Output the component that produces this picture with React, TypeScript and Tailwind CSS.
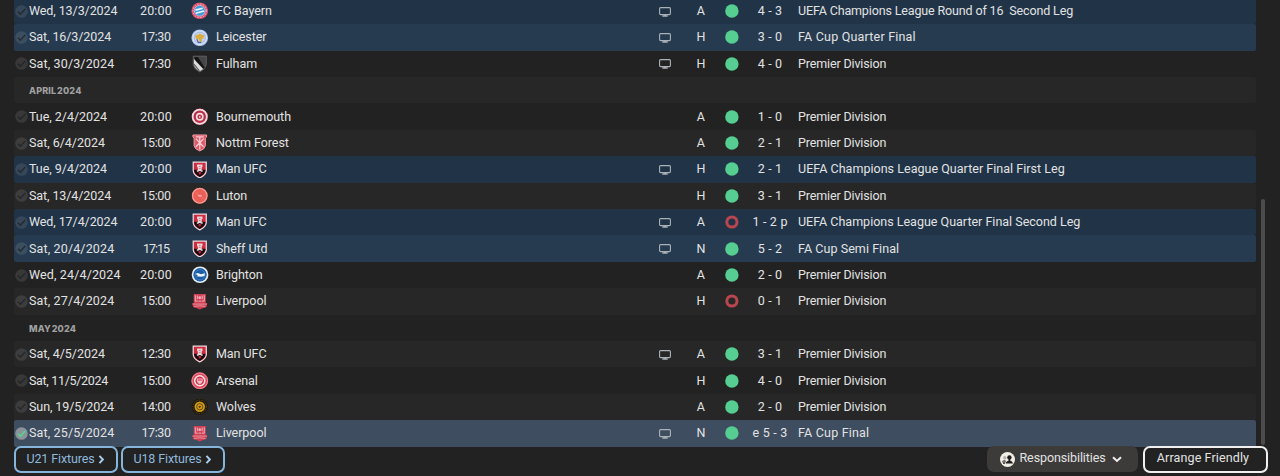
import type { ReactNode } from 'react';
import clsx from 'clsx';

type Club =
  | 'bayern' | 'leicester' | 'fulham' | 'bournemouth' | 'forest' | 'manufc'
  | 'luton' | 'brighton' | 'liverpool' | 'arsenal' | 'wolves';

interface Fixture {
  date: string;
  time: string;
  club: Club;
  name: string;
  tv?: boolean;
  venue: 'H' | 'A' | 'N';
  lost?: boolean;
  score: string;
  competition: string;
  cup?: boolean;
  selected?: boolean;
}

type Row = Fixture | { month: string };

const ROWS: Row[] = [
  { date: 'Wed, 13/3/2024', time: '20:00', club: 'bayern', name: 'FC Bayern', tv: true, venue: 'A', score: '4 - 3', competition: 'UEFA Champions League Round of 16  Second Leg', cup: true },
  { date: 'Sat, 16/3/2024', time: '17:30', club: 'leicester', name: 'Leicester', tv: true, venue: 'H', score: '3 - 0', competition: 'FA Cup Quarter Final', cup: true },
  { date: 'Sat, 30/3/2024', time: '17:30', club: 'fulham', name: 'Fulham', tv: true, venue: 'H', score: '4 - 0', competition: 'Premier Division' },
  { month: 'APRIL 2024' },
  { date: 'Tue, 2/4/2024', time: '20:00', club: 'bournemouth', name: 'Bournemouth', venue: 'A', score: '1 - 0', competition: 'Premier Division' },
  { date: 'Sat, 6/4/2024', time: '15:00', club: 'forest', name: 'Nottm Forest', venue: 'A', score: '2 - 1', competition: 'Premier Division' },
  { date: 'Tue, 9/4/2024', time: '20:00', club: 'manufc', name: 'Man UFC', tv: true, venue: 'H', score: '2 - 1', competition: 'UEFA Champions League Quarter Final First Leg', cup: true },
  { date: 'Sat, 13/4/2024', time: '15:00', club: 'luton', name: 'Luton', venue: 'H', score: '3 - 1', competition: 'Premier Division' },
  { date: 'Wed, 17/4/2024', time: '20:00', club: 'manufc', name: 'Man UFC', tv: true, venue: 'A', lost: true, score: '1 - 2 p', competition: 'UEFA Champions League Quarter Final Second Leg', cup: true },
  { date: 'Sat, 20/4/2024', time: '17:15', club: 'manufc', name: 'Sheff Utd', tv: true, venue: 'N', score: '5 - 2', competition: 'FA Cup Semi Final', cup: true },
  { date: 'Wed, 24/4/2024', time: '20:00', club: 'brighton', name: 'Brighton', venue: 'A', score: '2 - 0', competition: 'Premier Division' },
  { date: 'Sat, 27/4/2024', time: '15:00', club: 'liverpool', name: 'Liverpool', venue: 'H', lost: true, score: '0 - 1', competition: 'Premier Division' },
  { month: 'MAY 2024' },
  { date: 'Sat, 4/5/2024', time: '12:30', club: 'manufc', name: 'Man UFC', tv: true, venue: 'A', score: '3 - 1', competition: 'Premier Division' },
  { date: 'Sat, 11/5/2024', time: '15:00', club: 'arsenal', name: 'Arsenal', venue: 'H', score: '4 - 0', competition: 'Premier Division' },
  { date: 'Sun, 19/5/2024', time: '14:00', club: 'wolves', name: 'Wolves', venue: 'A', score: '2 - 0', competition: 'Premier Division' },
  { date: 'Sat, 25/5/2024', time: '17:30', club: 'liverpool', name: 'Liverpool', tv: true, venue: 'N', score: 'e 5 - 3', competition: 'FA Cup Final', cup: true, selected: true },
];

const SHIELD = 'M2.3 1.2H15.7V10Q15.2 14.4 9 17.4Q2.8 14.4 2.3 10Z';

const CRESTS: Record<Club, ReactNode> = {
  bayern: (
    <>
      <circle cx="9" cy="9" r="8.6" fill="#dc4f6c" />
      <circle cx="9" cy="9" r="7" fill="none" stroke="#f0b8c6" strokeWidth="1" strokeDasharray="1.5 1.5" />
      <circle cx="9" cy="9" r="5.6" fill="#3f9ada" stroke="#f3dbe3" strokeWidth=".6" />
      <path d="M4.6 8.4 12 6.4M5 11.6 13.4 9.2" stroke="#e9f5ff" strokeWidth="1.7" />
    </>
  ),
  leicester: (
    <>
      <circle cx="9" cy="9" r="8.6" fill="#a9bde6" />
      <circle cx="9" cy="9" r="7" fill="none" stroke="#d8e4fb" strokeWidth="1.2" />
      <circle cx="9" cy="9" r="5.2" fill="#c6d4ee" />
      <path d="M4.2 6.3 7.5 5.8 9 4.4 11 5.8 14 6.5 12.6 9.8 11.2 10 11.4 13H9.2L8 10.6 5 9.9Z" fill="#d9ad42" />
      <path d="M6 10.6 7.6 13.8H10.4" fill="none" stroke="#53658e" strokeWidth="1.3" />
    </>
  ),
  fulham: (
    <>
      <path d={SHIELD} fill="#454547" stroke="#6c6c70" strokeWidth=".8" />
      <path d="M3.2 2.2 7 2 14.2 13 9 16.5Z" fill="#131313" />
      <path d="M3 4.2 12.6 14.5 9 16.7Q3.4 13.7 3 9.5Z" fill="#dcdcdc" />
      <path d="M3 9.4 8.6 16.4" stroke="#606060" strokeWidth="1.2" />
    </>
  ),
  bournemouth: (
    <>
      <circle cx="9" cy="9" r="8.4" fill="#b8304a" />
      <circle cx="9" cy="9" r="7.3" fill="none" stroke="#f1dadd" strokeWidth="1.8" />
      <circle cx="9" cy="9" r="3.2" fill="none" stroke="#f5dfe2" strokeWidth="1.6" />
      <circle cx="9" cy="9" r=".9" fill="#f5dfe2" />
    </>
  ),
  forest: (
    <>
      <path d="M2 1H16V3.2L14.8 4.4V12Q14.5 15.4 9 17.4Q3.5 15.4 3.2 12V4.4L2 3.2Z" fill="#dd5b69" stroke="#f0a0a8" strokeWidth="1" />
      <path d="M9 2.8V16M9 9 5 4.8M9 9 13 4.8M9 9 5 13.3M9 9 13 13.3M5 3H13" stroke="#f9cdd1" strokeWidth="1.3" fill="none" />
    </>
  ),
  manufc: (
    <>
      <path d={SHIELD} fill="#cf2c42" stroke="#f0dadd" strokeWidth="1.3" />
      <path d="M3.2 9H14.8V10Q14.3 13.6 9 16.4Q3.7 13.6 3.2 10Z" fill="#17090d" />
      <path d="M6.2 3.5H11.8V5.8L11 6.8V9.6H12V11H10.6Q9 9.6 7.4 11H6V9.6H7V6.8L6.2 5.8Z" fill="#ead9dc" />
      <path d="M8.1 5.5H9.9M8.1 7.6H9.9" stroke="#d0576a" strokeWidth=".8" />
      <path d="M7.2 12 9 14.4 10.8 12 9 11Z" fill="#b8293d" />
    </>
  ),
  luton: (
    <>
      <circle cx="9" cy="9" r="8.2" fill="#ea6058" />
      <circle cx="9" cy="9" r="7.4" fill="none" stroke="#f3a49c" strokeWidth="1.1" />
      <path d="M4.8 5.6 8 8M13.4 12.4 10.8 10.3" stroke="#ee8176" strokeWidth=".8" />
      <path d="M6.8 8.4H11.4L10.6 9.8H7.8Z" fill="#f7c3b8" />
    </>
  ),
  brighton: (
    <>
      <circle cx="9.3" cy="9" r="8.6" fill="#e6eef8" />
      <circle cx="9.3" cy="9" r="6.9" fill="#1b5ca6" />
      <circle cx="9.3" cy="9" r="5.2" fill="none" stroke="#4c82c0" strokeWidth=".7" />
      <path d="M4.2 8.2 7 7.2 10.3 8.4 14.2 7.4 14 10.2 10.5 11 5.5 10.5 7.2 9.4Z" fill="#eef5fc" />
    </>
  ),
  liverpool: (
    <>
      <path d="M2.8 1H15.2V10.5H16.9L15.7 14.6Q12.5 15 9 17Q5.5 15 2.3 14.6L1.1 10.5H2.8Z" fill="#cf4055" />
      <path d="M4.4 2.3V8.4H7M13.6 2.3V8.4H11M6.5 2.6V6.4M11.5 2.6V6.4M7.7 8.4H10.3" stroke="#efb5bd" strokeWidth="1" fill="none" />
      <circle cx="9" cy="4.8" r="1.4" fill="#efb5bd" />
      <path d="M1.8 11.4H16.2M3.2 13.8Q9 12.6 14.8 13.8" stroke="#ea9ca7" strokeWidth=".9" fill="none" />
    </>
  ),
  arsenal: (
    <>
      <circle cx="9" cy="9" r="8.7" fill="#dd4a60" />
      <circle cx="9" cy="9" r="8" fill="none" stroke="#ee8d99" strokeWidth="1" />
      <circle cx="9" cy="9" r="5.2" fill="#cf3048" stroke="#fbe5e8" strokeWidth="1.5" />
      <path d="M6 6.6H12V9.3Q11.6 11.6 9 12.8Q6.4 11.6 6 9.3Z" fill="#f5bcc3" />
      <path d="M7 8.2H11" stroke="#d2364c" strokeWidth="1.1" />
    </>
  ),
  wolves: (
    <>
      <circle cx="9" cy="9" r="8.3" fill="#1b170d" />
      <circle cx="9" cy="9" r="6.9" fill="none" stroke="#6b5114" strokeWidth=".9" strokeDasharray="1.6 1" />
      <circle cx="9" cy="9" r="5.4" fill="#d09a1c" />
      <circle cx="9" cy="9" r="3.2" fill="none" stroke="#5a4410" strokeWidth=".9" />
      <path d="M7.4 8.4H10.6L9 10.4Z" fill="#2b210b" />
    </>
  ),
};

const COMPETITION_TRACKING: Record<string, string> = {
  'Premier Division': '-tracking-[0.14px]',
  'UEFA Champions League Round of 16  Second Leg': '-tracking-[0.14px]',
  'UEFA Champions League Quarter Final First Leg': 'tracking-[0.03px]',
  'UEFA Champions League Quarter Final Second Leg': 'tracking-[0px]',
  'FA Cup Semi Final': 'tracking-[0.06px]',
};

const countOnes = (text: string) => text.split('1').length - 1;

// The digit 1 is narrow, so dates and times close up around it
function dateSpacing(date: string) {
  return date.length === 13 ? -0.03 : 0.14 - 0.23 * countOnes(date);
}

function timeSpacing(time: string) {
  return 0.2 - 0.6 * countOnes(time);
}

function CheckMark({ active }: { active?: boolean }) {
  return (
    <svg viewBox="0 0 13 13" className="ml-px h-[13px] w-[13px]">
      <circle cx="6.5" cy="6.5" r="6.3" fill={active ? '#8a929a' : '#ffffff'} fillOpacity={active ? 1 : 0.1} />
      <path d="M3 6.8 5.4 9.2 10.2 4" fill="none" stroke={active ? '#4fdc8c' : '#1b1e21'} strokeOpacity={active ? 1 : 0.7} strokeWidth="1.5" />
    </svg>
  );
}

function TvIcon() {
  return (
    <svg viewBox="0 0 12 10" className="mt-px h-[10px] w-[12px]" fill="none">
      <rect x=".6" y=".6" width="10.8" height="7" rx="1" stroke="#aab2b8" strokeWidth="1.1" />
      <path d="M3.3 9H8.7M5 7.8H7" stroke="#aab2b8" strokeWidth="1.5" />
    </svg>
  );
}

function ResultDot({ lost }: { lost?: boolean }) {
  return (
    <svg viewBox="0 0 14 14" className="size-3.5">
      {lost ? (
        <circle cx="6.9" cy="7" r="5.1" fill="none" stroke="#b7464f" strokeWidth="3" />
      ) : (
        <circle cx="6.9" cy="7" r="6.7" fill="#56ce91" />
      )}
    </svg>
  );
}

function rowBackground(row: Row, odd: boolean) {
  if ('month' in row || !row.cup) return odd ? 'bg-[#272727]' : 'bg-[#222222]';
  if (row.selected) return 'bg-[#3e4d5f]';
  return odd ? 'bg-[#263b50]' : 'bg-[#203347]';
}

function FixtureRow({ row, odd }: { row: Row; odd: boolean }) {
  return (
    <div className={clsx('flex h-[26.4px] items-center rounded-[2px]', rowBackground(row, odd))}>
      {'month' in row ? (
        <span className="pt-0.5 pl-[15px] font-['Inter',sans-serif] text-[9px] font-extrabold tracking-[0.2px] text-[#a0a0a0] [word-spacing:-1.6px]">{row.month}</span>
      ) : (
        <>
          <div className="w-[15px]"><CheckMark active={row.selected} /></div>
          <span className="w-[99px]" style={{ letterSpacing: dateSpacing(row.date) }}>{row.date}</span>
          <span className="w-14 text-center" style={{ letterSpacing: timeSpacing(row.time) }}>{row.time}</span>
          <div className="flex w-8 justify-center">
            <svg viewBox="0 0 18 18" className="h-[17.5px] w-[17.5px]">{CRESTS[row.club]}</svg>
          </div>
          <span className="w-[434px] tracking-[-0.05px]">{row.name}</span>
          <div className="flex w-[30px] justify-center">{row.tv && <TvIcon />}</div>
          <span className="w-[42px] text-center">{row.venue}</span>
          <div className="flex w-5 justify-center">
            <ResultDot lost={row.lost} />
          </div>
          <span className="w-14 text-center">{row.score}</span>
          <span className={COMPETITION_TRACKING[row.competition]}>{row.competition}</span>
        </>
      )}
    </div>
  );
}

export default function App() {
  return (
    <div className="flex h-[476px] w-[1280px] flex-col overflow-hidden bg-[#222223] font-['Roboto',sans-serif] text-[12.5px] leading-4 tracking-[0.2px] whitespace-pre text-[#e2e2e2]">
      <div className="-mt-[2.1px] flex shrink-0 pl-3.5">
        <div className="w-[1242px]">
          {ROWS.map((row, i) => (
            <FixtureRow key={i} row={row} odd={i % 2 === 1} />
          ))}
        </div>
        <div className="mt-[201px] ml-[5px] h-[246px] w-1 rounded-full bg-[#4c4c4c]" />
      </div>

      {/* Footer actions */}
      <div className="-mt-[0.7px] flex h-[27px] shrink-0 items-stretch justify-between pr-3 pl-3.5">
        <div className="flex gap-[3px]">
          {['U21 Fixtures', 'U18 Fixtures'].map((label) => (
            <button key={label} className="flex w-[104px] items-center rounded-[7px] border-2 border-[#86b5dc] pb-px pl-[10.5px] tracking-[-0.13px] text-[#8fb9dc]">
              {label}
              <svg viewBox="0 0 7 10" className="mt-[2px] ml-[3px] h-[9px] w-[6.5px]" fill="none">
                <path d="M1.5 1 5.3 5 1.5 9" stroke="#a9cdec" strokeWidth="2.2" />
              </svg>
            </button>
          ))}
        </div>
        <div className="flex gap-[5px]">
          <button className="flex h-[26px] w-[151px] items-center rounded-[7px] bg-[#3c3b39] pb-px pl-[13px] tracking-[-0.1px]">
            <svg viewBox="0 0 15 15" className="mt-0.5 mr-[4.5px] size-[15px]">
              <circle cx="7.5" cy="7.5" r="7.5" fill="#f1eee6" />
              <circle cx="4.8" cy="5.7" r="1.7" fill="#b5b1aa" />
              <path d="M1.8 10.6Q2.4 7.8 5 7.8L6.6 10.6Z" fill="#77736d" />
              <circle cx="9.4" cy="5.4" r="2.2" fill="#1f1e1d" />
              <path d="M5.6 11.5Q6 9.4 8.6 8.4V6.5H10.2V8.4Q12.8 9.4 13 11.5Z" fill="#1f1e1d" />
              <path d="M3 11.2H5" stroke="#1f1e1d" strokeWidth="1.2" />
            </svg>
            Responsibilities
            <svg viewBox="0 0 10 7" className="mt-[3px] ml-[6.5px] h-[7px] w-[10px]" fill="none">
              <path d="M1 1.3 5 5 9 1.3" stroke="#efefef" strokeWidth="2" />
            </svg>
          </button>
          <button className="flex w-[125px] items-center justify-center rounded-[7px] border-2 border-[#f0f0f0] pr-[5px] pb-[3px] tracking-[0.12px]">
            Arrange Friendly
          </button>
        </div>
      </div>
    </div>
  );
}
